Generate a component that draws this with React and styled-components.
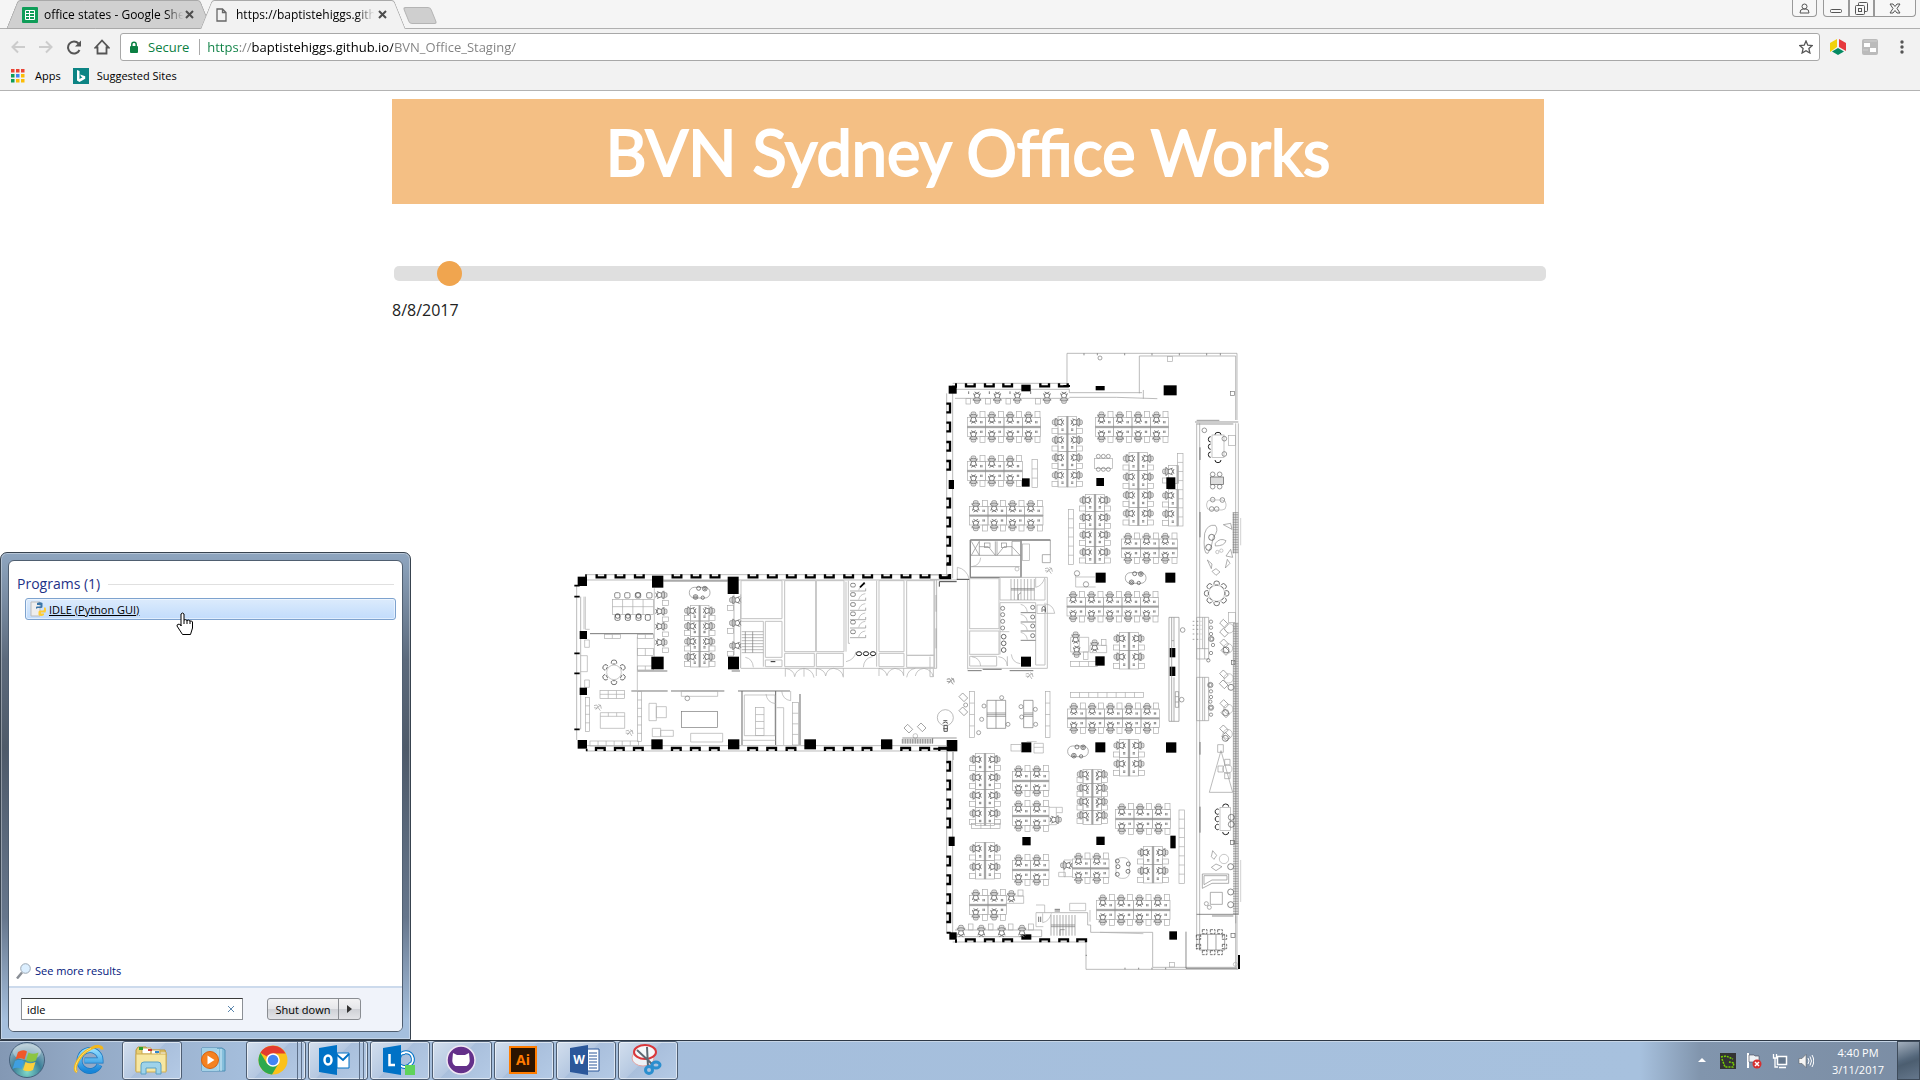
import React from "react";
import styled, { createGlobalStyle, css } from "styled-components";

const Global = createGlobalStyle`
  * { box-sizing: border-box; }
  body { margin: 0; background: #fff; font-family: "Open Sans", "Noto Sans", sans-serif; font-size: 11px; color: #000; }
  button, input { font: inherit; color: inherit; }
  button { border: 0; background: none; padding: 0; }
  a { color: inherit; text-decoration: none; }
  svg { display: block; flex: none; }
`;

const Desktop = styled.div`
  position: relative;
  display: flex;
  flex-direction: column;
  min-height: 100vh;
  overflow: hidden;
`;

/* ---------- browser frame ---------- */
const Browser = styled.header`
  background: #f2f2f2;
  border-bottom: 1px solid #b3b3b3;
`;
const TabStrip = styled.div`
  display: flex;
  height: 29px;
  padding-left: 12px;
  background: #f5f5f5;
  border-bottom: 1px solid #b0b0b0;
`;
const Tab = styled.div`
  position: relative;
  z-index: ${(p) => (p.$active ? 2 : 1)};
  display: flex;
  align-items: center;
  width: 194px;
  height: 29px;
  padding: 0 12px 0 10px;
  &::before, &::after {
    content: "";
    position: absolute;
    z-index: -1;
    top: 0;
    bottom: 0;
    background: ${(p) => (p.$active ? "#f2f2f2" : "#d0d0d0")};
    border: 1px solid #a9a9a9;
    border-bottom: ${(p) => (p.$active ? "0" : "1px solid #a9a9a9")};
  }
  &::before { left: 0; right: 50%; border-right: 0; transform: skewX(-22deg); border-top-left-radius: 3px; }
  &::after { right: 0; left: 40%; border-left: 0; transform: skewX(22deg); border-top-right-radius: 3px; }
`;
const TabTitle = styled.button`
  flex: 1;
  display: flex;
  align-items: center;
  gap: ${(p) => p.$gap}px;
  white-space: nowrap;
  text-align: left;
  font-size: 12px;
  line-height: 20px;
  mask-image: linear-gradient(to right, #000 88%, transparent 99%);
`;
const TabClose = styled.button`
  display: grid;
  place-items: center;
  width: 12px;
  height: 16px;
`;
const NewTab = styled.button`
  width: 28px;
  height: 17px;
  margin: 7px 0 0 6px;
  background: #cfcfcf;
  border: 1px solid #b4b4b4;
  border-radius: 3px;
  transform: skewX(22deg);
`;
const WindowButtons = styled.div`
  display: flex;
  align-items: flex-start;
  margin-left: auto;
  padding-right: 4px;
`;
const WindowButton = styled.button`
  display: grid;
  place-items: center;
  width: ${(p) => p.$w}px;
  height: 17px;
  border: 1px solid #999;
  border-top: 0;
  border-radius: ${(p) => p.$radius || "0"};
  margin-left: ${(p) => p.$gap || 0}px;
  background: #f7f7f7;
`;
const Toolbar = styled.div`
  display: flex;
  align-items: center;
  height: 36px;
  padding-left: 8px;
`;
const ToolButton = styled.button`
  display: grid;
  place-items: center;
  width: ${(p) => p.$w || 28}px;
  height: 28px;
  flex: none;
`;
const Omnibox = styled.label`
  flex: 1;
  display: flex;
  align-items: center;
  height: 28px;
  padding: 0 6px 0 8px;
  background: #fff;
  border: 1px solid #a8a8a8;
  border-radius: 3px;
  font-size: 13px;
`;
const Secure = styled.span`
  display: flex;
  align-items: center;
  gap: 9px;
  padding-right: 10px;
  margin-right: 7px;
  border-right: 1px solid #aaa;
  line-height: 16px;
  color: #0b8043;
`;
const Address = styled.input`
  flex: 1;
  min-width: 0;
  height: 22px;
  padding: 0;
  border: 0;
  outline: 0;
  color: #222;
  background-image: linear-gradient(to right, #0b8043 32px, #808080 32px, #808080 45px, #000 45px, #000 186px, #808080 186px);
  -webkit-background-clip: text;
  background-clip: text;
  -webkit-text-fill-color: transparent;
`;
const Bookmarks = styled.nav`
  display: flex;
  align-items: center;
  gap: 12px;
  height: 25px;
  padding: 0 11px 3px;
`;
const Bookmark = styled.a`
  display: flex;
  align-items: center;
  gap: ${(p) => p.$gap}px;
  line-height: 16px;
`;

/* ---------- page ---------- */
const Page = styled.main`
  flex: 1;
  width: 60%;
  margin-left: calc(20% + 8px);
  padding-top: 8px;
`;
const Banner = styled.h1`
  display: flex;
  align-items: center;
  justify-content: center;
  height: 105px;
  margin: 0;
  background: #f4bf84;
  color: #fff;
  font: 400 63px/76px Lato, sans-serif;
  -webkit-text-stroke: 2px #fff;
`;
const Slider = styled.input`
  -webkit-appearance: none;
  appearance: none;
  display: block;
  width: 100%;
  height: 15px;
  margin: 62px 2px 0;
  border-radius: 5px;
  background: #dfdfdf;
  outline: 0;
  &::-webkit-slider-thumb {
    -webkit-appearance: none;
    width: 25px;
    height: 25px;
    border-radius: 50%;
    background: #f0a54f;
  }
`;
const DateLabel = styled.output`
  display: block;
  margin-top: 17px;
  font-size: 16px;
  line-height: 24px;
  color: #222;
`;
const Plan = styled.figure`
  margin: 18px 0 0 168px;
`;

/* ---------- start menu ---------- */
const StartMenu = styled.section`
  position: absolute;
  z-index: 5;
  left: 0;
  bottom: 40px;
  width: 411px;
  height: 488px;
  padding: 7px;
  border: 1px solid #38434f;
  border-radius: 7px 7px 0 0;
  background: linear-gradient(#8fa6c0, #5c6a7c 22%, #4e5a69 40%, #66768c 75%, #a5bfdd 96%);
  box-shadow: inset 0 0 0 1px rgba(255, 255, 255, 0.35);
`;
const MenuPanel = styled.div`
  display: flex;
  flex-direction: column;
  height: 100%;
  background: #fff;
  border: 1px solid #4f5e70;
  border-radius: 6px;
  overflow: hidden;
`;
const GroupTitle = styled.h2`
  display: flex;
  align-items: center;
  gap: 8px;
  margin: 13px 8px 4px;
  font-size: 14px;
  font-weight: 400;
  line-height: 20px;
  color: #1e3287;
  &::after { content: ""; flex: 1; border-top: 1px solid #e0e0e0; }
`;
const Result = styled.a`
  display: flex;
  align-items: center;
  gap: 3px;
  height: 22px;
  margin: 0 6px 0 16px;
  padding-left: 4px;
  border: 1px solid #7da2ce;
  border-radius: 3px;
  background: linear-gradient(#dcebfc, #c1dcfc);
  box-shadow: inset 0 0 0 1px rgba(255, 255, 255, 0.5);
  text-decoration: underline;
`;
const MoreResults = styled.a`
  display: flex;
  align-items: center;
  gap: 3px;
  margin: auto 0 6px 7px;
  line-height: 18px;
  color: #00157c;
`;
const MenuFooter = styled.div`
  display: flex;
  align-items: flex-start;
  gap: 24px;
  height: 45px;
  padding: 10px 12px;
  background: #f0f3fa;
  border-top: 2px solid #ccdaec;
`;
const SearchBox = styled.label`
  display: flex;
  align-items: center;
  width: 222px;
  height: 22px;
  padding: 0 7px 0 5px;
  border: 1px solid #8b8f95;
  border-top-color: #3a3a3a;
  background: #fff;
`;
const SearchInput = styled.input`
  flex: 1;
  min-width: 0;
  border: 0;
  outline: 0;
  padding: 0;
  background: none;
`;
const SplitButton = styled.div`
  display: flex;
  height: 22px;
  border: 1px solid #8a8d92;
  border-radius: 3px;
  background: linear-gradient(#f3f3f4, #e6e7ea 48%, #cfd1d6 52%, #e3e4e8);
`;
const SplitPart = styled.button`
  display: grid;
  place-items: center;
  width: ${(p) => p.$w}px;
  & + & { border-left: 1px solid #8a8d92; }
`;
const Pointer = styled.svg`
  position: absolute;
  z-index: 6;
  left: 176px;
  bottom: 445px;
`;

/* ---------- taskbar ---------- */
const Taskbar = styled.footer`
  display: flex;
  height: 40px;
  border-top: 1px solid #2d3846;
  box-shadow: inset 0 1px 0 #c6d5e6;
  background: linear-gradient(to right, #8398b4 0, #93a9c5 80px, #a4bddb 240px, #a7c1de 1640px, #8195ad 1700px, #7b8da4 100%);
`;
const TaskGroup = styled.nav`
  display: flex;
  gap: 2px;
`;
const TaskButton = styled.button`
  position: relative;
  display: grid;
  place-items: center;
  width: ${(p) => p.$w || 60}px;
  height: 39px;
  padding: 0 ${(p) => (p.$stack ? 6 : p.$w ? 4 : 2)}px 2px 0;
  ${(p) =>
    p.$open &&
    css`
      border: 1px solid #4e5e73;
      border-radius: 3px;
      background: linear-gradient(135deg, #d3dfee, #b5c8e1 45%, #a9bfdc 46%, #b4cae5);
      box-shadow: inset 0 0 0 1px rgba(255, 255, 255, 0.55);
    `}
  ${(p) =>
    p.$stack &&
    css`
      &::after {
        content: "";
        position: absolute;
        top: 0;
        bottom: 0;
        right: 3px;
        width: 3px;
        border: solid #5d6f88;
        border-width: 0 1px;
      }
    `}
`;
const Tray = styled.div`
  display: flex;
  align-items: center;
  margin-left: auto;
`;
const TrayButton = styled.button`
  display: grid;
  place-items: center;
  width: 26px;
`;
const Clock = styled.time`
  width: 78px;
  text-align: center;
  color: #fff;
  line-height: 17px;
`;
const ShowDesktop = styled.button`
  width: 23px;
  height: 39px;
  border: 1px solid #3e4b5a;
  background: linear-gradient(160deg, #a3afbd, #55687c 45%, #4c5e70 55%, #65778c);
`;

/* ---------- floor plan pieces, drawn at three units per pixel ---------- */
const range = (n) => Array.from({ length: n }, (_, i) => i);

const Seat = ({ x, y, s = 1 }) => (
  <g transform={`translate(${x} ${y}) scale(1 ${s})`}>
    <rect x="-7" y="3" width="14" height="13" rx="4" stroke="#777" fill="#e4e4e4" />
    <ellipse cy="4" rx="10" ry="5" stroke="#666" fill="#ccc" />
    <path d="M-5 0L-10 -14M5 0L10 -14M-8 -10L7 -18M8 -10L-7 -18" stroke="#777" strokeWidth="3" />
    <path d="M-11 9v-6M11 9v-6" stroke="#666" />
  </g>
);

const Row = ({ n, unit = 55, s = 1 }) => (
  <g transform={`scale(1 ${s})`}>
    {range(n).map((i) => (
      <g key={i} transform={`translate(${i * unit} 0)`}>
        <rect width={unit} height="28" />
        <Seat x={unit / 3} y={29} />
        <rect x={unit - 17} y="28" width="15" height="18" />
        <path d={`M${unit - 15} 11v7M${unit - 11} 11v7`} stroke="#444" />
      </g>
    ))}
  </g>
);

const Bank = ({ x, y, n, unit, v, half }) => (
  <g transform={`translate(${x} ${y})${v ? " rotate(90)" : ""}`}>
    {half !== "up" && <Row n={n} unit={unit} />}
    {half !== "down" && <Row n={n} unit={unit} s={-1} />}
    <path d={`M0 -2H${n * (unit || 55)}M0 2H${n * (unit || 55)}`} stroke="#888" />
  </g>
);

const Shelf = ({ x, y, w, h, n }) => (
  <g>
    <rect x={x} y={y} width={w} height={h} />
    {range(n - 1).map((i) =>
      w > h ? (
        <path key={i} d={`M${x + ((i + 1) * w) / n} ${y}v${h}`} />
      ) : (
        <path key={i} d={`M${x} ${y + ((i + 1) * h) / n}h${w}`} />
      )
    )}
  </g>
);

const Columns = ({ items }) => (
  <g fill="#000" stroke="none">
    {items.map(([x, y, w, h]) => (
      <rect key={`${x}-${y}`} x={x} y={y} width={w} height={h} />
    ))}
  </g>
);

const NOTCH = {
  up: (a, b) => `M${a} ${b}v9h26v-9`,
  down: (a, b) => `M${a} ${b + 10}v-9h26v9`,
  left: (a, b) => `M${a} ${b}h11v26h-11`,
};
const Notches = ({ dir, along, at }) => (
  <path
    d={along.map((p) => (dir === "left" ? NOTCH.left(at, p) : NOTCH[dir](p, at))).join("")}
    stroke="#000"
    strokeWidth="7"
  />
);

const Circles = ({ items, r = 6, stroke }) => (
  <g stroke={stroke}>
    {items.map(([x, y]) => (
      <circle key={`${x}-${y}`} cx={x} cy={y} r={r} />
    ))}
  </g>
);

const Diamonds = ({ items, r = 13 }) => (
  <path d={items.map(([x, y]) => `M${x - r} ${y - 2}L${x - 2} ${y - r}L${x + r} ${y + 2}L${x + 2} ${y + r}z`).join("")} stroke="#777" />
);

const RoundTable = ({ x, y, r, n, ring }) => (
  <g>
    <circle cx={x} cy={y} r={r} />
    {range(n).map((i) => (
      <g key={i} transform={`translate(${x} ${y}) rotate(${(i * 360) / n}) translate(0 ${-ring})`} stroke="#333">
        <path d="M-8 4v-5a8 6 0 0 1 16 0v5M-5 5h10" />
      </g>
    ))}
  </g>
);

const Lounge = ({ x, y, w = 62, h = 32 }) => (
  <g>
    <rect x={x} y={y} width={w} height={h} rx="15" stroke="#888" />
    <g stroke="#444">
      <circle cx={x + w * 0.3} cy={y + h - 3} r="7" />
      <circle cx={x + w * 0.3} cy={y + h - 3} r="3" />
      <circle cx={x + w * 0.75} cy={y + 4} r="7" />
      <circle cx={x + w * 0.75} cy={y + 4} r="3" />
      <circle cx={x + w * 0.45} cy={y + 3} r="6" />
      <circle cx={x + w * 0.65} cy={y + h - 1} r="5" />
    </g>
  </g>
);

const Person = ({ x, y }) => (
  <path transform={`translate(${x} ${y})`} d="M-11 -4l8 -2 4 6 9 -6M-6 8l6 -8 8 11M-11 2l10 2M2 -8l7 4 2 9" stroke="#999" />
);

const Hatch = ({ x, y, w, h, step = 5, v, stroke = "#888" }) => (
  <path
    stroke={stroke}
    d={range(Math.floor((v ? w : h) / step) + 1)
      .map((i) => (v ? `M${x + i * step} ${y}v${h}` : `M${x} ${y + i * step}h${w}`))
      .join("")}
  />
);

const NorthWing = () => (
  <g transform="translate(370 0) scale(0.33333)">
    <path
      d="M411 40H921V240M411 40V130M628 48V160M418 158H636M640 150V176M628 48H917V240M418 172H560L682 176M75 148H418V158M75 175H418M50 160V715M68 160V715M68 130H410M68 148V160"
      stroke="#999"
    />
    <path d="M462 40v6M502 40v6M584 40v6M666 40v6M748 40v6M830 40v6M871 40v6" stroke="#555" />
    <Notches dir="up" at={130} along={[108, 165, 220, 331, 387]} />
    <path d="M400 138h20M78 130v10h-12" stroke="#000" strokeWidth="6" />
    <Notches dir="left" at={49} along={[191, 248, 306, 363, 476, 533, 591, 648]} />
    <path d="M32 702v12h28v-12" stroke="#000" strokeWidth="7" />
    {[141, 202, 262, 351, 402].map((x) => <Seat key={x} x={x} y={174} />)}
    {[108, 167, 228, 317].map((x) => <rect key={x} x={x} y="175" width="14" height="17" />)}
    <Hatch x={116} y={154} w={240} h={8} step={62} v stroke="#333" />
    <Bank x={112} y={261} n={4} />
    <Bank x={112} y={393} n={3} />
    <Bank x={119} y={527} n={4} />
    <Bank x={496} y={261} n={4} />
    <Bank x={575} y={625} n={3} unit={56} />
    <Bank x={411} y={800} n={5} />
    <Bank x={412} y={229} n={4} unit={53} v />
    <Bank x={625} y={337} n={4} v />
    <Bank x={495} y={463} n={4} unit={52} v />
    <Bank x={743} y={376} n={1} v half="down" />
    <Bank x={743} y={448} n={2} v half="down" />
    <Shelf x={743} y={340} w={16} h={218} n={8} />
    <Shelf x={306} y={359} w={16} h={83} n={3} />
    <Shelf x={415} y={509} w={15} h={164} n={6} />
    <Columns
      items={[[56, 137, 24, 24], [274, 134, 28, 20], [497, 138, 27, 13], [701, 136, 39, 30], [276, 415, 23, 25], [499, 414, 23, 24], [709, 412, 27, 35], [56, 420, 16, 27], [497, 698, 30, 30], [706, 698, 30, 30]]}
    />
    <rect x="494" y="355" width="54" height="30" />
    <Circles r={6} stroke="#777" items={[[505, 349], [520, 349], [535, 349], [505, 388], [520, 388], [535, 388], [510, 54]]} />
    <path d="M437 704V741H497M437 711H497" />
    <Circles r={8} stroke="#777" items={[[441, 700], [468, 733]]} />
    <Lounge x={586} y={698} />
    <rect x="712" y="50" width="15" height="14" />
    <rect x="902" y="155" width="12" height="12" stroke="#777" />

    <path d="M795 246H925M800 241H868M800 252H910" stroke="#666" />
    <path d="M800 250V1830M809 250V1830M917 250V1750M925 250V1725" stroke="#999" />
    <path d="M810 322v38M810 516v76M810 1206v38M810 1400v78" stroke="#777" strokeWidth="3" />
    <rect x="846" y="285" width="36" height="68" />
    <g stroke="#222" strokeWidth="3">
      <path d="M855 284a9 7 0 0 1 18 0M842 306a7 8 0 1 1 0 -16M842 328a7 8 0 1 1 0 -16M842 352a7 8 0 1 1 0 -16M855 360a9 8 0 0 0 18 0" />
    </g>
    <Circles r={7} stroke="#666" items={[[823, 271], [883, 296], [883, 342], [848, 403], [869, 403], [848, 440], [869, 440], [848, 479], [877, 480], [845, 507], [860, 507]]} />
    <rect x="842" y="411" width="38" height="22" stroke="#555" fill="#ddd" />
    <rect x="895" y="286" width="22" height="30" />
    <rect x="830" y="480" width="58" height="30" rx="12" />
    <path d="M824 580Q832 552 856 556Q868 570 850 592Q846 620 834 640Q818 646 824 580zM856 610Q870 592 888 602Q884 618 856 618z" stroke="#888" />
    <Circles r={9} stroke="#444" items={[[845, 592], [836, 622]]} />
    <Circles r={5} items={[[862, 636], [874, 632]]} />
    <path d="M880 554l22 -4 4 18zM888 648l14 -20 6 24zM832 660l14 12 -2 14zM846 694l12 -8 12 10 -12 10zM886 684l6 -26 8 12z" stroke="#888" />
    <RoundTable x={860} y={760} r={24} n={8} ring={30} />
    <Hatch x={908} y={518} w={17} h={122} stroke="#777" />
    <path d="M910 518V640" stroke="#777" />
    <path d="M932 534V616" stroke="#bbb" />

    <g stroke="#888">
      <path d="M121 600H361V668H337V644H361M121 600V712H273V603M121 680H269M123 646H272M148 604V646M196 604V646M201 604V646M246 604V646M124 604L148 646M124 646L148 604M148 620H175L196 646M201 646L222 620H246L270 646M246 604L270 604" />
      <path d="M121 600H361M121 600V712H273V600" strokeWidth="4" />
      <rect x="164" y="609" width="16" height="13" />
      <rect x="214" y="609" width="16" height="13" />
    </g>
    <rect x="277" y="612" width="22" height="49" />
    <path d="M125 680q25 -3 27 -27M82 682V720M82 682q28 5 36 36M317 712v30q20 -4 28 -30" />
    <circle cx="261" cy="687" r="6" />
    <Person x={356} y={690} />
    <path d="M28 740v-15h52M80 718h40" stroke="#444" strokeWidth="3" />
    <path d="M0 705H32M0 718H28" />
  </g>
);

const CentreWing = () => (
  <g transform="translate(370 220) scale(0.33333)">
    <g stroke="#c2c2c2" strokeWidth="3">
      <rect x="119" y="56" width="88" height="150" />
      <rect x="119" y="213" width="88" height="70" />
      <path d="M113 60V328M210 52H352V325M210 52V120H345V56M210 128H317V315H345V128M210 128V283M119 289H200V318H119zM113 325H352M232 289V318" />
      <path d="M13 60V325M19 60V325M0 286H13M0 290V350H10V325" />
    </g>
    <path d="M125 290q25 3 27 28M205 290q25 3 27 28M244 283q3 25 27 28M348 132q22 3 26 28h-26" />
    <path d="M113 332H155M239 332H310M158 328H215" stroke="#777" strokeWidth="3" />
    <Hatch x={243} y={57} w={70} h={63} step={10} v stroke="#999" />
    <path d="M243 86H313M243 90H313M265 120v-16l8 -6" stroke="#777" />
    <Circles r={6} stroke="#555" items={[[218, 145], [218, 164], [218, 184], [218, 204]]} />
    <Circles r={7} stroke="#222" items={[[221, 230], [221, 250], [221, 270]]} />
    <path d="M272 158H317M272 186H317M272 213H317M272 241H317" stroke="#888" strokeWidth="3" />
    <path d="M272 133q18 4 20 24M272 163q18 4 20 22M272 190q18 4 20 22M272 217q18 4 20 22M210 215H238" />
    <Circles r={6} stroke="#444" items={[[308, 142], [308, 171], [308, 198], [308, 227]]} />
    <rect x="321" y="135" width="26" height="26" />
    <path d="M336 156v-12l5 -6 5 6v12M338 150h8" stroke="#333" />
    <Columns
      items={[[273, 290, 30, 30], [719, 264, 17, 28], [719, 320, 17, 28], [496, 547, 30, 30], [708, 547, 31, 31], [274, 547, 30, 30], [50, 540, 32, 34]]}
    />
    <Person x={62} y={362} />
    <Person x={298} y={346} />
    <Shelf x={119} y={395} w={14} h={137} n={4} />
    <Shelf x={346} y={395} w={14} h={137} n={4} />
    <path d="M171 421H227V505H171zM198 421V505M281 421H309V503H281z" stroke="#777" />
    <path d="M171 459H227M171 464H227M171 469H227M281 459H309M281 464H309M281 469H309" stroke="#777" />
    <Circles r={6} stroke="#777" items={[[162, 438], [155, 478], [215, 413], [234, 493], [273, 440], [275, 471], [316, 448], [317, 493], [107, 435], [146, 518]]} />
    <Diamonds items={[[100, 412], [100, 454]]} />
    <circle cx="46" cy="473" r="24" stroke="#999" />
    <path d="M40 482h12M38 490l8 -4 8 4M42 496v18h10v-18zM40 506h14" stroke="#555" strokeWidth="3" />
    <rect x="243" y="553" width="30" height="20" />
    <path d="M312 550H340V579H312zM312 562H340M290 545H320" />
    <Bank x={597} y={217} n={2} v />
    <Bank x={597} y={538} n={2} v />
    <Bank x={413} y={475} n={5} />
    <path d="M422 232H476V276H422zM448 232V276M480 256H530V278H480z" />
    <Seat x={437} y={232} s={-1} />
    <Seat x={440} y={276} />
    <Seat x={494} y={256} s={-1} />
    <rect x="514" y="238" width="14" height="18" />
    <rect x="460" y="276" width="14" height="22" />
    <Shelf x={421} y={304} w={82} h={15} n={3} />
    <Shelf x={421} y={397} w={220} h={15} n={8} />
    <Columns items={[[496, 289, 28, 28]]} />
    <Lounge x={413} y={558} />
    <g stroke="#888">
      <path d="M717 172H747V484H717zM725 172V484M732 172V262M732 352V484M736 395H746V442H736zM736 410H746M736 426H746M725 242H732" />
    </g>
    <Circles r={7} stroke="#777" items={[[758, 210], [755, 419]]} />
    <path d="M800 172H836V297H800zM818 172V266M824 172V297M800 266H836M800 352H836V482H800zM818 352V482M824 352V482" stroke="#999" />
    <path d="M788 184h26M788 196h26M788 208h26M788 222h26M788 238h26" strokeDasharray="5 7" stroke="#777" />
    <Circles r={5} stroke="#666" items={[[843, 185], [843, 203], [843, 222], [845, 237], [849, 255], [843, 279], [835, 301], [841, 375], [843, 394], [843, 411], [841, 425], [843, 443], [843, 464]]} />
    <Circles r={8} stroke="#666" items={[[844, 237], [841, 375], [843, 443]]} />
    <Diamonds items={[[882, 191], [882, 218], [883, 250], [886, 273], [882, 343], [881, 373], [883, 432], [886, 460], [882, 508], [888, 530]]} />
    <Circles r={14} items={[[898, 205], [894, 265], [896, 355], [895, 447], [893, 522]]} />
    <Circles r={9} stroke="#555" items={[[888, 270], [903, 382], [887, 458], [886, 535]]} />
    <rect x="895" y="158" width="22" height="30" />
    <rect x="904" y="301" width="11" height="12" stroke="#666" />
    <Hatch x={909} y={190} w={16} h={660} stroke="#777" />
    <path d="M910 190V850M918 190V850" stroke="#999" />
  </g>
);

const SouthWing = () => (
  <g transform="translate(370 390) scale(0.33333)">
    <path d="M50 64V610M68 64V610M68 636H468V718H925M482 607H668V712H920M917 556V712M921 556V718M75 620H335V600H75M318 548H473V585H482V607" stroke="#999" />
    <path d="M585 718v-5M626 718v-5M666 718v-5M707 718v-5M467 676h4" stroke="#555" />
    <path d="M768 605V715H920" stroke="#555" />
    <path d="M510 607L640 611" />
    <Notches dir="left" at={49} along={[96, 152, 209, 266, 380, 436, 493, 550]} />
    <Notches dir="down" at={627} along={[108, 165, 220, 331, 388, 442]} />
    <path d="M50 608h12M78 638v-10" stroke="#000" strokeWidth="6" />
    <Bank x={165} y={70} n={4} unit={54} v />
    <Bank x={165} y={337} n={2} v />
    <Bank x={487} y={119} n={4} unit={41} v />
    <Bank x={669} y={349} n={2} v />
    <Shelf x={124} y={281} w={86} h={15} n={3} />
    <Bank x={247} y={153} n={2} />
    <Bank x={247} y={258} n={2} />
    <path d="M357 232H379V284H357M379 232H397V248H379" />
    <g transform="translate(378 269) rotate(-90)"><Seat x={0} y={0} /></g>
    <Bank x={247} y={420} n={2} />
    <Bank x={427} y={415} n={2} />
    <path d="M427 390H402V440H427M386 427H406V440H386z" />
    <g transform="translate(408 406) rotate(90)"><Seat x={0} y={0} /></g>
    <Bank x={557} y={267} n={3} />
    <Bank x={500} y={540} n={4} />
    <Bank x={119} y={525} n={2} />
    <path d="M227 498H281V520H227" />
    <Seat x={244} y={498} s={-1} />
    <rect x="264" y="480" width="15" height="18" />
    <Columns
      items={[[56, 320, 18, 28], [277, 321, 25, 25], [499, 320, 25, 25], [721, 317, 16, 38], [718, 604, 23, 25], [58, 607, 22, 22], [274, 613, 30, 16], [924, 675, 6, 42]]}
    />
    <Shelf x={747} y={240} w={16} h={220} n={8} />
    {[93, 154, 215, 276].map((x) => <Seat key={x} x={x} y={602} s={-1} />)}
    {[115, 175, 235, 296].map((x) => <rect key={x} x={x} y="582" width="14" height="18" />)}
    <rect x="558" y="383" width="40" height="62" rx="16" />
    <Circles r={6} stroke="#444" items={[[562, 393], [564, 410], [562, 433], [595, 402], [594, 424]]} />
    <Hatch x={363} y={555} w={72} h={62} step={9} v />
    <path d="M363 585H435M363 590H435M390 617v-18h14" stroke="#777" />
    <path d="M318 525H344V548M318 548V590H340M338 550v28q20 -4 26 -28M419 520H467V542H419zM480 540V575" />
    <path d="M374 543h16M374 538h16M326 560v16M332 560v16" stroke="#777" strokeWidth="3" />
    <path d="M873 62L838 187H908zM863 44H880V67H863zM884 88H900V106H884zM864 108H880V126H864zM884 128H900V146H884z" stroke="#999" />
    <circle cx="892" cy="117" r="14" />
    <rect x="870" y="232" width="32" height="70" />
    <path d="M878 230a9 8 0 0 1 18 0M866 252a7 8 0 1 1 0 -14M866 274a7 8 0 1 1 0 -14M866 298a7 8 0 1 1 0 -14M878 306a9 8 0 0 0 18 0" stroke="#222" strokeWidth="3" />
    <circle cx="882" cy="387" r="14" />
    <path d="M848 362l12 14 -8 12 -8 -8zM844 412l14 -10 18 8 -18 12zM817 432H896V460H846L817 475zM822 437H891V450H846L822 464zM841 487H877V523H841z" stroke="#888" />
    <Circles r={6} stroke="#888" items={[[829, 521], [838, 532]]} />
    <Circles r={9} stroke="#555" items={[[904, 262], [904, 283], [902, 410], [902, 486], [902, 524]]} />
    <path d="M800 553H925M846 558H910" stroke="#555" />
    <rect x="902" y="331" width="11" height="12" stroke="#666" />
    <Hatch x={909} y={340} w={16} h={213} stroke="#777" />
    <path d="M932 390V516" stroke="#bbb" />
    <path d="M808 613H884V660H808zM833 613V660M858 613V660" stroke="#777" />
    <path
      d={[[817, 599], [841, 599], [863, 599], [817, 662], [841, 662], [863, 662]].map(([x, y]) => `M${x} ${y}h14v12h-14z`).join("") +
        [[799, 615], [799, 643], [877, 615], [877, 643]].map(([x, y]) => `M${x} ${y}h13v13h-13z`).join("")}
      stroke="#333"
      strokeDasharray="8 3"
    />
    <rect x="719" y="697" width="14" height="14" />
    <rect x="903" y="610" width="12" height="12" stroke="#666" />
    <circle cx="916" cy="703" r="6" />
  </g>
);

const STALLS = [76, 104, 134, 162, 187, 216];
const WestWing = () => (
  <g transform="translate(0 220) scale(0.33333)">
    <path d="M80 44H1160M80 60H1190M80 557H1160M80 573H1160M50 77V540M62 110V508M1162 560V600M1180 575V600" stroke="#999" />
    <Notches dir="up" at={43} along={[110, 167, 225, 338, 395, 452, 566, 624, 681, 738, 795, 853, 910, 967, 1025, 1082, 1140]} />
    <Notches dir="down" at={563} along={[108, 165, 222, 336, 393, 450, 565, 622, 680, 795, 852, 908, 1024, 1081, 1138]} />
    <path d="M43 77h16M43 110h16M43 280h16M43 340h16M43 508h16M78 43v10M80 574v-8" stroke="#000" strokeWidth="5" />
    <path d="M1160 10h12M1120 566h45" stroke="#000" strokeWidth="6" />
    <path d="M90 221H280M310 63H503M214 393H323M333 393H493M534 393H690M232 333H322M515 333H540" stroke="#777" strokeWidth="3" />
    <path d="M76 110V208M72 110V208M76 208H89M283 85V290M232 230V390M62 287H82V335H62M74 240H88V262H74zM74 360H88V382H74z" />
    <Shelf x={157} y={118} w={123} h={45} n={4} />
    <path d="M157 140H280" />
    {[172, 202, 234, 268].map((x) => <rect key={x} x={x - 8} y="98" width="16" height="16" rx="4" stroke="#555" />)}
    {[173, 204, 236, 264].map((x) => <rect key={x} x={x - 8} y="164" width="15" height="17" rx="4" stroke="#444" />)}
    <Circles r={7} stroke="#444" items={[[234, 105], [173, 168], [204, 168], [236, 168]]} />
    <Shelf x={133} y={223} w={48} h={12} n={2} />
    <Shelf x={232} y={223} w={48} h={12} n={2} />
    <Shelf x={232} y={265} w={48} h={22} n={2} />
    <Shelf x={232} y={318} w={48} h={12} n={2} />
    {[105, 154, 199, 247].map((y) => (
      <g key={y}>
        <g transform={`translate(305 ${y}) rotate(-90)`}><Seat x={0} y={0} /></g>
        <rect x="308" y={y + 17} width="18" height="14" />
      </g>
    ))}
    {[120, 189, 257].map((y) => (
      <g key={y}>
        <g transform={`translate(525 ${y}) rotate(90)`}><Seat x={0} y={0} /></g>
        <rect x="503" y={y + 17} width="18" height="14" />
      </g>
    ))}
    <path d="M542 103V325M522 103V285" stroke="#999" />
    <Columns
      items={[[53, 50, 28, 28], [276, 47, 34, 36], [503, 50, 33, 52], [59, 213, 22, 24], [59, 383, 22, 22], [53, 540, 28, 26], [274, 290, 37, 38], [504, 290, 33, 38], [274, 538, 34, 30], [504, 538, 34, 30], [733, 538, 35, 30], [963, 538, 34, 30]]}
    />
    <Lounge x={388} y={82} />
    <Bank x={419} y={137} n={4} unit={46} v />
    <RoundTable x={162} y={337} r={22} n={6} ring={30} />
    <Shelf x={120} y={392} w={74} h={23} n={3} />
    <path d="M120 403H194M121 458H194V505H121zM121 469H194M145 458V469M170 458V469" />
    <Shelf x={76} y={412} w={13} h={102} n={4} />
    <Shelf x={233} y={395} w={12} h={150} n={6} />
    <Shelf x={90} y={543} w={145} h={15} n={6} />
    <Person x={113} y={441} />
    <Person x={208} y={517} />
    <path d="M267 430H289V482H267zM289 440H319V473H289zM277 505H302V530H277zM302 511H340V529H302zM392 520H488V546H392zM364 393H473V409H364z" />
    <rect x="364" y="454" width="109" height="48" stroke="#777" />
    <Circles r={7} stroke="#777" items={[[382, 415]]} />
    <path d="M546 393V555M647 393V555M720 402V555" stroke="#666" strokeWidth="3" />
    <path d="M553 405H645V527H553zM546 541H647M650 443H671V555M618 402q3 26 29 29M665 393q3 26 27 29V393" />
    <Shelf x={587} y={443} w={25} h={83} n={4} />
    <Shelf x={697} y={428} w={18} h={127} n={4} />

    <path
      d="M543 62H666V176H543zM543 184H610V320M616 184H666V292H616zM674 62H767V275H674zM769 62H852V275H769zM957 62H1032V275H957zM1040 62H1122V286H1040zM674 280H763V320H674zM769 280H850V320H769zM957 280H1032V320H957zM1040 286H1122V322H1040zM858 65V275M865 62V250H870M950 62V320M1130 62V325M543 325H1130M616 300H666V320H616z"
      stroke="#c2c2c2"
      strokeWidth="3"
    />
    <path d="M676 350V325q26 4 28 25M732 350V325q26 4 30 28M704 350q4 -22 28 -25M769 348V325q26 4 28 23M850 350V325M797 348q4 -22 24 -23q26 4 29 27M957 348V325q20 4 24 22q4 -18 24 -22q24 4 26 22V325M1040 352q4 -24 26 -27M1066 348q4 -20 26 -23q22 4 28 25M888 275q-4 24 -30 30M938 290q-26 4 -28 32M556 292q22 4 24 30" />
    <Hatch x={545} y={215} w={65} h={63} step={9} stroke="#999" />
    <path d="M556 215V278M578 215V278" stroke="#777" />
    <path d={STALLS.map((y) => `M870 ${y + 17}H917v-8`).join("")} stroke="#888" />
    <path d={STALLS.map((y) => `M896 ${y + 15}q4 -16 20 -18`).join("")} />
    {STALLS.map((y) => <rect key={y} x="872" y={y - 6} width="14" height="11" rx="4" stroke="#555" />)}
    <path d="M900 82l14 -14" stroke="#000" strokeWidth="5" />
    <g stroke="#222" strokeWidth="3">
      <ellipse cx="897" cy="281" rx="8" ry="6" />
      <ellipse cx="918" cy="281" rx="8" ry="6" />
      <ellipse cx="939" cy="281" rx="8" ry="6" />
      <path d="M632 305h14" />
    </g>
    <path d="M1128 105v50M1128 205v60" stroke="#999" />
    <Diamonds items={[[1045, 506], [1085, 502]]} />
    <circle cx="1066" cy="528" r="7" />
    <Hatch x={1027} y={537} w={92} h={14} step={5} v stroke="#555" />
    <path d="M1027 534H1190M1118 534V550" stroke="#666" />
    <Person x={1171} y={362} />
  </g>
);

const FloorPlan = () => (
  <svg width="700" height="640" viewBox="0 0 700 640" fill="none" stroke="#aaa" strokeWidth="2" role="img" aria-label="Office floor plan">
    <NorthWing />
    <CentreWing />
    <SouthWing />
    <WestWing />
  </svg>
);

/* ---------- icons ---------- */
const Svg = ({ w = 16, h = w, box, children }) => (
  <svg width={w} height={h} viewBox={box || `0 0 ${w} ${h}`} fill="none" aria-hidden="true">
    {children}
  </svg>
);
const CloseX = () => (
  <Svg w={9}><path d="M1 1l7 7M8 1l-7 7" stroke="#4d4d4d" strokeWidth="2" /></Svg>
);
const SheetsIcon = () => (
  <Svg w={16}><rect width="16" height="16" rx="1" fill="#0f9d58" /><path d="M3.500 3.500h9v9h-9zM3.500 6.500h9M3.500 9.500h9M7.500 3.500v9" stroke="#fff" /></Svg>
);
const PageIcon = () => (
  <Svg w={11} h={14}><path d="M1 1h5.500L10 4.500V13H1zM6.500 1v3.500H10" stroke="#666" strokeWidth="1.300" /></Svg>
);
const OrbIcon = () => (
  <Svg w={38}>
    <defs>
      <radialGradient id="orb" cx="50%" cy="85%" r="90%"><stop offset="0" stopColor="#7fd8c8" /><stop offset=".45" stopColor="#3b7f98" /><stop offset="1" stopColor="#b9c9d6" /></radialGradient>
    </defs>
    <circle cx="19" cy="19" r="17.500" fill="url(#orb)" stroke="#46607c" />
    <ellipse cx="19" cy="11" rx="14" ry="8" fill="#fff" opacity=".35" />
    <path d="M10 11q5 -3 9 -.5l-2.500 8q-4.500 -2.500 -9 0z" fill="#f0582a" />
    <path d="M20.500 11.500q4 2.500 10 0l-2.500 8q-5 2.500 -10 0z" fill="#8cc540" />
    <path d="M7 20q4.500 -2.500 9 0l-2.500 8q-4.500 -2.500 -9 0z" fill="#3f9fe0" />
    <path d="M17.500 21q4.500 2.500 10 0l-2.500 8q-5 2.500 -10 0z" fill="#fcd03c" />
  </Svg>
);
const IeIcon = () => (
  <Svg w={32}>
    <defs><linearGradient id="ie" x2="0" y2="1"><stop stopColor="#8fdcff" /><stop offset="1" stopColor="#1785d8" /></linearGradient></defs>
    <path d="M26.500 21A10.500 10.500 0 1 1 27.500 16.500H11.500" stroke="#1976c0" strokeWidth="6" />
    <path d="M26.500 21A10.500 10.500 0 1 1 27.500 16.500H11.500" stroke="url(#ie)" strokeWidth="4.500" />
    <path d="M4 28C-1 25 6 10 18 4.500c6 -3 11 -3 11 1" stroke="#f2b71c" strokeWidth="3" />
    <path d="M4 28C-1 25 6 10 18 4.500" stroke="#ffe377" />
  </Svg>
);
const ExplorerIcon = () => (
  <Svg w={34} h={30}>
    <path d="M2 5l2 -3h8l2 3h17l1 4v17H2z" fill="#e9cf73" stroke="#b9953b" />
    <path d="M8 3h9v6H8zM17 5h9v5h-9zM23 7h9v5h-9z" fill="#fff" stroke="#c8a850" />
    <path d="M5 2h4v3H5z" fill="#2ba02b" /><path d="M14 4h4v2h-4z" fill="#c33" /><path d="M21 6h4v2h-4z" fill="#38c" />
    <path d="M2 9h30v18H2z" fill="#f7e7a2" stroke="#cfae55" />
    <path d="M7 29v-9q0 -3 3 -3h14q3 0 3 3v9h-5v-6h-10v6z" fill="#9ed3ea" stroke="#5aa0c4" />
  </Svg>
);
const PlayerIcon = () => (
  <Svg w={28} h={26}>
    <path d="M3 1h20l3 2v21H3z" fill="#85bfdc" stroke="#4d8fb5" /><path d="M19 2v22M22 2v22" stroke="#d5edf8" /><path d="M3 1h15v23H3z" fill="#a3d1e7" />
    <circle cx="11" cy="13" r="8.500" fill="#f58220" stroke="#d9620f" /><path d="M8.500 8.500v9l7 -4.500z" fill="#fff" />
  </Svg>
);
const ChromeIcon = () => (
  <Svg w={30}>
    <circle cx="15" cy="15" r="14.500" fill="#fbc11a" />
    <path d="M15 15L2.400 7.800A14.500 14.500 0 0 1 27.600 8.500H15z" fill="#e33b2e" />
    <path d="M2.400 7.800A14.500 14.500 0 0 0 14 29.500L20.500 18.500 9 18.500z" fill="#2da94f" />
    <circle cx="15" cy="15" r="6.800" fill="#fff" /><circle cx="15" cy="15" r="5.300" fill="#4285f4" />
  </Svg>
);
const glyph = { fontFamily: '"Open Sans", sans-serif', fontWeight: 700, textAnchor: "middle" };
const OutlookIcon = () => (
  <Svg w={32} h={30}>
    <path d="M0 3l18 -3v30l-18 -3z" fill="#0072c6" /><path d="M18 8h12v15H18z" fill="#fff" stroke="#0072c6" /><path d="M17 9l7 6 6 -6" stroke="#0072c6" strokeWidth="2" />
    <ellipse cx="9" cy="15" rx="3.500" ry="4.500" stroke="#fff" strokeWidth="2.500" />
  </Svg>
);
const LyncIcon = () => (
  <Svg w={32} h={30}>
    <path d="M16 13a7 7 0 1 1 9 8M22 8a7 7 0 1 0 6 10" stroke="#0072c6" strokeWidth="4" /><path d="M16 13a7 7 0 1 1 9 8M22 8a7 7 0 1 0 6 10" stroke="#fff" strokeWidth="2" />
    <path d="M0 3l18 -3v30l-18 -3z" fill="#0072c6" /><path d="M6.500 9v11h5.500" stroke="#fff" strokeWidth="2.500" /><path d="M22 20h10v10H22z" fill="#5fd35b" />
  </Svg>
);
const GithubIcon = () => (
  <Svg w={30}>
    <circle cx="15" cy="15" r="14" fill="#64308a" stroke="#efe7f3" strokeWidth="1.500" />
    <path d="M7 8l4 2h8l4 -2 .5 5q1 6 -3 8h-11q-4 -2 -3 -8z" fill="#fff" />
  </Svg>
);
const AiIcon = () => (
  <Svg w={28}>
    <rect x="1" y="1" width="26" height="26" fill="#2b1400" stroke="#ff7c00" strokeWidth="2" />
    <text x="14" y="19" fontSize="14" fill="#ff7c00" {...glyph}>Ai</text>
  </Svg>
);
const WordIcon = () => (
  <Svg w={30}>
    <path d="M17 4h12v22H17z" fill="#fff" stroke="#2b579a" /><path d="M19 8h8M19 11h8M19 14h8M19 17h8M19 20h8M19 23h8" stroke="#2b579a" />
    <path d="M0 3l18 -3v30l-18 -3z" fill="#2b579a" /><text x="9" y="19" fontSize="12" fill="#fff" {...glyph}>W</text>
  </Svg>
);
const SnipIcon = () => (
  <Svg w={32}>
    <ellipse cx="12" cy="14" rx="11" ry="8" fill="#eef2f6" stroke="#e3a3a3" /><ellipse cx="14" cy="8" rx="11" ry="7" fill="#f6f8fa" stroke="#d9363a" strokeWidth="2" />
    <path d="M6 6l15 14M16 3l1 20" stroke="#5d6872" strokeWidth="2" />
    <circle cx="18" cy="26" r="3.500" stroke="#2b8fcf" strokeWidth="3" /><ellipse cx="25" cy="21" rx="4" ry="3" stroke="#2b8fcf" strokeWidth="3" />
  </Svg>
);

const APPS = [
  { name: "Internet Explorer", icon: IeIcon },
  { name: "Windows Explorer", icon: ExplorerIcon, open: true },
  { name: "Media Player", icon: PlayerIcon },
  { name: "Chrome", icon: ChromeIcon, open: true, stack: true },
  { name: "Outlook", icon: OutlookIcon, open: true, stack: true },
  { name: "Lync", icon: LyncIcon, open: true },
  { name: "GitHub", icon: GithubIcon, open: true },
  { name: "Illustrator", icon: AiIcon, open: true },
  { name: "Word", icon: WordIcon, open: true },
  { name: "Snipping Tool", icon: SnipIcon, open: true },
];
const APP_DOTS = ["#ea4335", "#ea4335", "#ea4335", "#0f9d58", "#4285f4", "#fbbc05", "#0f9d58", "#fbbc05", "#fbbc05"];

export default function App() {
  return (
    <Desktop>
      <Global />
      <Browser>
        <TabStrip>
          <Tab>
            <TabTitle $gap={6}><SheetsIcon />office states - Google She</TabTitle>
            <TabClose aria-label="Close tab"><CloseX /></TabClose>
          </Tab>
          <Tab $active>
            <TabTitle $gap={9}><PageIcon />https://baptistehiggs.gith</TabTitle>
            <TabClose aria-label="Close tab"><CloseX /></TabClose>
          </Tab>
          <NewTab aria-label="New tab" />
          <WindowButtons>
            <WindowButton $w={25} $radius="0 0 4px 4px" aria-label="Profile">
              <Svg w={11}><circle cx="5.500" cy="3.500" r="2.500" stroke="#555" /><path d="M1 10q0 -4 3 -4h3q3 0 3 4z" stroke="#555" /></Svg>
            </WindowButton>
            <WindowButton $w={26} $gap={6} $radius="0 0 0 4px" aria-label="Minimize">
              <Svg w={13} h={11}><rect x=".5" y="6.500" width="11" height="3" rx="1" stroke="#555" /></Svg>
            </WindowButton>
            <WindowButton $w={25} aria-label="Restore">
              <Svg w={13}><rect x="3.500" y=".5" width="9" height="9" rx="1" stroke="#555" /><rect x=".5" y="3.500" width="9" height="9" rx="1" fill="#f7f7f7" stroke="#555" /><rect x="3.500" y="6.500" width="3" height="3" stroke="#555" /></Svg>
            </WindowButton>
            <WindowButton $w={42} $radius="0 0 4px 0" aria-label="Close">
              <Svg w={12} h={11}><path d="M1 1h3l2 2.500L8 1h3L8 5.500 11 10H8L6 7.500 4 10H1l3 -4.500z" stroke="#555" /></Svg>
            </WindowButton>
          </WindowButtons>
        </TabStrip>
        <Toolbar>
          <ToolButton $w={20} aria-label="Back"><Svg w={14}><path d="M14 7H2M7 1.500L1.500 7 7 12.500" stroke="#ccc" strokeWidth="2" /></Svg></ToolButton>
          <ToolButton $w={36} aria-label="Forward"><Svg w={14}><path d="M0 7h12M7 1.500L12.500 7 7 12.500" stroke="#ccc" strokeWidth="2" /></Svg></ToolButton>
          <ToolButton $w={20} aria-label="Reload"><Svg w={15}><path d="M12.500 10A6 6 0 1 1 11.500 3.500" stroke="#555" strokeWidth="2" /><path d="M14 .5v6H8z" fill="#555" /></Svg></ToolButton>
          <ToolButton $w={36} aria-label="Home"><Svg w={16}><path d="M1.500 8.500L8 1.500l6.500 7h-2V14.500h-9V8.500z" stroke="#555" strokeWidth="1.800" /></Svg></ToolButton>
          <Omnibox>
            <Secure>
              <Svg w={10} h={12}><rect x="1" y="5" width="8" height="7" rx="1" fill="#0b8043" /><path d="M2.800 5V3.500a2.200 2.200 0 0 1 4.400 0V5" stroke="#0b8043" strokeWidth="1.500" /></Svg>
              Secure
            </Secure>
            <Address aria-label="Address" defaultValue="https://baptistehiggs.github.io/BVN_Office_Staging/" />
            <Svg w={14}><path d="M7 1l1.800 4.200 4.400 .4 -3.300 3 1 4.400L7 10.700 3.100 13l1 -4.400 -3.300 -3 4.400 -.4z" stroke="#555" strokeWidth="1.300" /></Svg>
          </Omnibox>
          <ToolButton $w={36} aria-label="Extension">
            <Svg w={16}><path d="M0 4l7 -4v8l-7 5z" fill="#f0d20c" /><path d="M9 0l7 4v8l-7 -4z" fill="#e6393e" /><path d="M8 9l6 3.500L8 16 2 12.500z" fill="#048a62" /></Svg>
          </ToolButton>
          <ToolButton $w={28} aria-label="Extension">
            <Svg w={16}><rect width="16" height="16" rx="2" fill="#bbb" /><path d="M2 4h6v4H2zM8 9h6v4H8z" fill="#fff" /><path d="M2 2h13M1 11h5" stroke="#d0d0d0" /></Svg>
          </ToolButton>
          <ToolButton $w={36} aria-label="Menu">
            <Svg w={4} h={14}><circle cx="2" cy="2" r="1.700" fill="#555" /><circle cx="2" cy="7" r="1.700" fill="#555" /><circle cx="2" cy="12" r="1.700" fill="#555" /></Svg>
          </ToolButton>
        </Toolbar>
        <Bookmarks>
          <Bookmark href="#apps" $gap={10}>
            <Svg w={14}>{APP_DOTS.map((c, i) => <rect key={i} x={(i % 3) * 5} y={Math.floor(i / 3) * 5} width="3.500" height="3.500" fill={c} />)}</Svg>
            Apps
          </Bookmark>
          <Bookmark href="#suggested" $gap={8}>
            <Svg w={16}><rect width="16" height="16" fill="#0c8484" /><path d="M4 2l2.500 1v8l3 -1.700 -1.500 -.7 -.8 -2.200 5 1.900v2.500L6.500 14 4 12.600z" fill="#fff" /></Svg>
            Suggested Sites
          </Bookmark>
        </Bookmarks>
      </Browser>

      <Page>
        <Banner>BVN Sydney Office Works</Banner>
        <Slider type="range" id="stage" min="0" max="1000" defaultValue="38" aria-label="Date" />
        <DateLabel htmlFor="stage">8/8/2017</DateLabel>
        <Plan><FloorPlan /></Plan>
      </Page>

      <StartMenu>
        <MenuPanel>
          <GroupTitle>Programs (1)</GroupTitle>
          <Result href="#idle">
            <Svg w={16}>
              <path d="M1 1h9v14H1z" fill="#eee" stroke="#bbb" />
              <path d="M6 8V6.500Q6 5.500 7 5.500h3.500V4H7V2q3 -1.500 5.500 0v3.500q0 1.500 -1.500 1.500H8q-1 0 -2 1z" fill="#3a75a8" />
              <path d="M14 6.500h1.500q1 2.500 0 5H11v1h3v1.500q-2.500 2 -5.500 0V11q0 -1.500 1.500 -1.500h3q1 0 1 -1z" fill="#fc3" />
            </Svg>
            IDLE (Python GUI)
          </Result>
          <MoreResults href="#more">
            <Svg w={16}><path d="M1 15.500L6 9.500" stroke="#8a8f96" strokeWidth="2.500" /><circle cx="9.500" cy="5.500" r="4.800" fill="#dcefff" stroke="#9ba7b3" /></Svg>
            See more results
          </MoreResults>
          <MenuFooter>
            <SearchBox>
              <SearchInput aria-label="Search programs and files" defaultValue="idle" />
              <button aria-label="Clear"><Svg w={8}><path d="M1 1l6 6M7 1L1 7" stroke="#5b86ad" /></Svg></button>
            </SearchBox>
            <SplitButton>
              <SplitPart $w={70}>Shut down</SplitPart>
              <SplitPart $w={22} aria-label="More shut down options"><Svg w={5} h={8}><path d="M0 0l5 4 -5 4z" fill="#333" /></Svg></SplitPart>
            </SplitButton>
          </MenuFooter>
        </MenuPanel>
      </StartMenu>
      <Pointer width="18" height="23" viewBox="0 0 18 23" aria-hidden="true">
        <path d="M5 14V2q1.500 -2 3 0v6q1.500 -1 3 .5 1.500 -1 3 .5 2 -.5 2.500 1v6l-2 6.500H6.500L1 14q0 -3 4 -1z" fill="#fff" stroke="#000" />
        <path d="M8 8v4M11 8.500v3.500M14 9v3" stroke="#000" />
      </Pointer>

      <Taskbar>
        <TaskGroup>
          <TaskButton $w={58} aria-label="Start"><OrbIcon /></TaskButton>
          {APPS.map(({ name, icon: Icon, open, stack }) => (
            <TaskButton key={name} $open={open} $stack={stack} aria-label={name}><Icon /></TaskButton>
          ))}
        </TaskGroup>
        <Tray>
          <TrayButton aria-label="Hidden icons"><Svg w={8} h={5}><path d="M4 0l4 4H0z" fill="#fff" /></Svg></TrayButton>
          <TrayButton aria-label="Graphics settings"><Svg w={16}><rect width="16" height="16" fill="#333" /><path d="M1 4l5 -1 7 3M2 6l3 8 8 0 1 -4 -5 -1" stroke="#76d000" strokeWidth="1.500" strokeDasharray="2 1" /></Svg></TrayButton>
          <TrayButton aria-label="Action center"><Svg w={20} h={16}><path d="M4 0v15" stroke="#fff" strokeWidth="2" /><path d="M5 2h5l1 1h4v7h-4l-1 -1H5z" fill="#eef2f6" stroke="#445" strokeWidth=".6" /><circle cx="13" cy="11" r="4.500" fill="#d62f2f" /><path d="M11 9l4 4M15 9l-4 4" stroke="#fff" strokeWidth="1.500" /></Svg></TrayButton>
          <TrayButton aria-label="Network"><Svg w={16}><path d="M5.500 3.500h9v8h-9z" fill="#66788d" stroke="#fff" strokeWidth="1.500" /><path d="M7 14.500h7M1.500 1v4h3V1M3 5v9h3" stroke="#fff" strokeWidth="1.300" /></Svg></TrayButton>
          <TrayButton aria-label="Volume"><Svg w={16}><path d="M1 5.500h3l4 -4v13l-4 -4H1z" fill="#f5f5f5" stroke="#555" strokeWidth=".5" /><path d="M10 5q2 3 0 6M12 3.500q3 4.500 0 9M14 2q3.500 6 0 12" stroke="#fff" /></Svg></TrayButton>
          <Clock>4:40 PM<br />3/11/2017</Clock>
          <ShowDesktop aria-label="Show desktop" />
        </Tray>
      </Taskbar>
    </Desktop>
  );
}
